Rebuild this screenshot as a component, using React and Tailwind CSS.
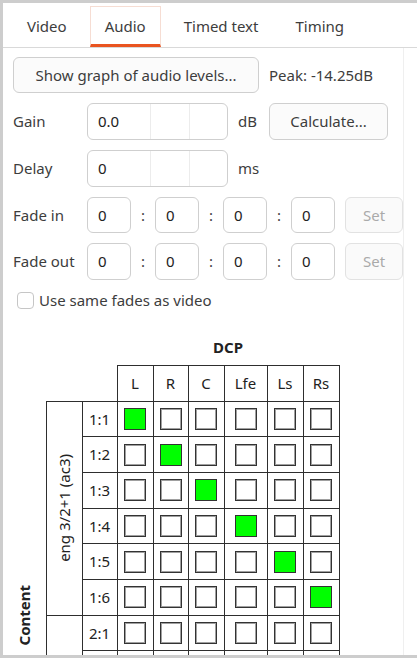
import React from "react";

const cols = ["L", "R", "C", "Lfe", "Ls", "Rs"];
const colWidths = [36, 35, 36, 43, 36, 36];

function Box({ on }) {
    return (
        <div
            className={
                "mx-auto w-[22px] h-[22px] border border-[#333] " +
                (on ? "bg-[#00ff00]" : "bg-white shadow-[inset_0_0_0_1px_#a0a0a0]")
            }
        />
    );
}

function Field({ value, width = "w-[44px]", spin = false }) {
    return (
        <div className={`${width} h-full flex border border-[#cfcfcf] rounded-[6px] bg-white overflow-hidden`}>
            <div className="flex-1 flex items-center pl-[10px] text-[#222]">{value}</div>
            {spin && (
                <>
                    <div className="w-[39px] border-l border-[#ececec]" />
                    <div className="w-[38px] border-l border-[#ececec]" />
                </>
            )}
        </div>
    );
}

function FadeRow({ label, h }) {
    return (
        <div className={`flex items-center ${h}`}>
            <span className="w-[74px]">{label}</span>
            <Field value="0" />
            <span className="w-[24px] text-center">:</span>
            <Field value="0" />
            <span className="w-[24px] text-center">:</span>
            <Field value="0" />
            <span className="w-[24px] text-center">:</span>
            <Field value="0" />
            <button className="ml-[10px] w-[58px] h-full rounded-[6px] border border-[#e2e2e2] bg-[#fafafa] text-[#aaaaaa]">
                Set
            </button>
        </div>
    );
}

export default function App() {
    const rows = [];
    for (let g = 1; g <= 2; g++) {
        for (let i = 1; i <= 6; i++) rows.push({ g, i });
    }

    return (
        <div className="w-[417px] h-[658px] overflow-hidden bg-white border-t-[3px] border-l-[3px] border-b-[3px] border-[#cdcdcd] flex flex-col text-[15px] text-[#3d3d3d] font-['Noto_Sans',sans-serif]">
            {/* tabs */}
            <div className="h-[45px] shrink-0 border-b border-[#d9d9d9] flex items-end pl-[10px] gap-[9px]">
                <div className="h-[41px] px-[14px] pt-[2px] flex items-center border-b-[3px] border-transparent">Video</div>
                <div className="h-[41px] px-[14px] pt-[2px] flex items-center border-x border-t border-[#f6ddd3] border-b-[3px] border-b-[#e95420]">
                    Audio
                </div>
                <div className="h-[41px] px-[14px] pt-[2px] flex items-center border-b-[3px] border-transparent">Timed text</div>
                <div className="h-[41px] px-[14px] pt-[2px] flex items-center border-b-[3px] border-transparent">Timing</div>
            </div>

            <div className="flex-1 flex min-h-0">
                <div className="w-[401px] shrink-0 border-r border-[#efefef] overflow-hidden">
                    <div className="pt-[9px] pl-[10px] flex flex-col gap-[10px]">
                        <div className="flex items-center h-[36px]">
                            <button className="w-[246px] h-full rounded-[6px] border border-[#cfcfcf] bg-[#fbfbfb]">
                                Show graph of audio levels...
                            </button>
                            <span className="ml-[10px]">Peak: -14.25dB</span>
                        </div>

                        <div className="flex items-center h-[37px]">
                            <span className="w-[74px]">Gain</span>
                            <Field value="0.0" width="w-[141px]" spin />
                            <span className="ml-[10px] w-[31px]">dB</span>
                            <button className="w-[119px] h-full rounded-[6px] border border-[#cfcfcf] bg-[#fbfbfb]">
                                Calculate...
                            </button>
                        </div>

                        <div className="flex items-center h-[37px]">
                            <span className="w-[74px]">Delay</span>
                            <Field value="0" width="w-[141px]" spin />
                            <span className="ml-[10px]">ms</span>
                        </div>

                        <FadeRow label="Fade in" h="h-[36px]" />
                        <FadeRow label="Fade out" h="h-[37px]" />

                        <div className="flex items-center h-[20px] pl-[4px] gap-[5px]">
                            <div className="w-[17px] h-[17px] rounded-[4px] border border-[#c6c6c6] bg-white" />
                            <span>Use same fades as video</span>
                        </div>
                    </div>

                    <table className="mt-[20px] border-collapse table-fixed text-[#222]">
                        <colgroup>
                            <col className="w-[43px]" />
                            <col className="w-[36px]" />
                            <col className="w-[35px]" />
                            {colWidths.map((w, i) => (
                                <col key={i} style={{ width: w }} />
                            ))}
                        </colgroup>
                        <tbody>
                            <tr className="h-[35px]">
                                <td colSpan={3} />
                                <td colSpan={6} className="text-center font-bold">DCP</td>
                            </tr>
                            <tr className="h-[36px]">
                                <td colSpan={3} />
                                {cols.map(c => (
                                    <td key={c} className="border border-[#2e2e2e] text-center">{c}</td>
                                ))}
                            </tr>
                            {rows.map(({ g, i }) => (
                                <tr key={`${g}-${i}`} className="h-[35.7px]">
                                    {g === 1 && i === 1 && (
                                        <td rowSpan={12} className="align-middle">
                                            <div className="flex justify-center">
                                                <span className="[writing-mode:vertical-rl] rotate-180 font-bold">Content</span>
                                            </div>
                                        </td>
                                    )}
                                    {i === 1 && (
                                        <td rowSpan={6} className="border border-[#2e2e2e] align-middle">
                                            <div className="flex justify-center">
                                                <span className="[writing-mode:vertical-rl] rotate-180 whitespace-nowrap">
                                                    {g === 1 ? "eng 3/2+1 (ac3)" : ""}
                                                </span>
                                            </div>
                                        </td>
                                    )}
                                    <td className="border border-[#2e2e2e] text-center">{g}:{i}</td>
                                    {cols.map((c, k) => (
                                        <td key={c} className="border border-[#2e2e2e]">
                                            <Box on={g === 1 && k === i - 1} />
                                        </td>
                                    ))}
                                </tr>
                            ))}
                        </tbody>
                    </table>
                </div>
                <div className="flex-1" />
            </div>
        </div>
    );
}
